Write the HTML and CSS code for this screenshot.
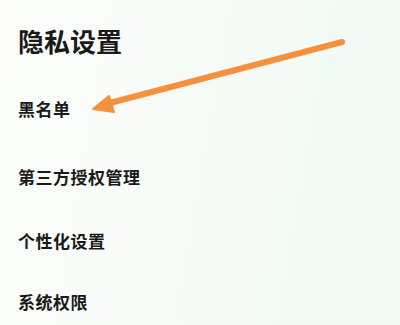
FILE: index.html
```html
<!DOCTYPE html>
<html lang="zh">
<head>
<meta charset="utf-8">
<link rel="stylesheet" href="styles.css">
</head>
<body>
<div class="page">
  <h1 class="title">隐私设置</h1>
  <ul class="menu">
    <li class="item item-1">黑名单</li>
    <li class="item item-2">第三方授权管理</li>
    <li class="item item-3">个性化设置</li>
    <li class="item item-4">系统权限</li>
  </ul>
  <svg class="arrow" width="400" height="325" viewBox="0 0 400 325">
    <line x1="342" y1="42" x2="106" y2="104" stroke="#f5913c" stroke-width="6" stroke-linecap="round"/>
    <polygon points="93,109 109,96 114,112" fill="#f5913c" stroke="#f5913c" stroke-width="2" stroke-linejoin="round"/>
  </svg>
</div>
</body>
</html>
```
FILE: styles.css
```css
html, body {
  margin: 0;
  padding: 0;
}
body {
  width: 400px;
  height: 325px;
  overflow: hidden;
  background: linear-gradient(100deg, #fbfcfa 0%, #f5faf6 60%, #f1faf5 100%);
  font-family: "Noto Sans CJK SC", "Noto Sans", sans-serif;
  color: #1a1a1a;
}
.page {
  position: relative;
  width: 400px;
  height: 325px;
  padding: 28px 0 0 18px;
  box-sizing: border-box;
}
.title {
  margin: 0;
  font-size: 26px;
  line-height: 26px;
  font-weight: 700;
  letter-spacing: 0;
}
.menu {
  list-style: none;
  margin: 0;
  padding: 0;
  display: flex;
  flex-direction: column;
}
.item {
  font-size: 17px;
  line-height: 20px;
  font-weight: 700;
  letter-spacing: 0.5px;
}
.item-1 { margin-top: 45px; }
.item-2 { margin-top: 48px; }
.item-3 { margin-top: 44px; }
.item-4 { margin-top: 41px; }
.arrow {
  position: absolute;
  left: 0;
  top: 0;
}
```
